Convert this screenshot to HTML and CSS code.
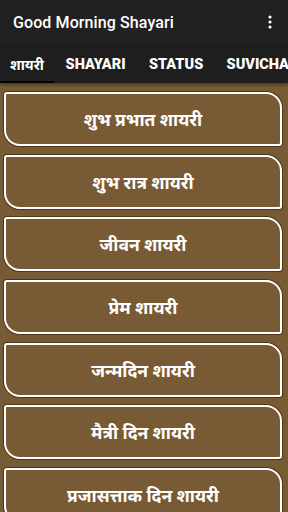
FILE: index.html
```html
<!DOCTYPE html>
<html lang="hi">

<head>
    <meta charset="UTF-8" />
    <meta name="viewport" content="width=device-width, initial-scale=1.0" />
    <title>Good Morning Shayari</title>
    <link rel="stylesheet" href="styles.css">
</head>

<body>

    <header class="appbar">
        <h1>Good Morning Shayari</h1>
        <span class="menu">
            <svg width="4" height="14" viewBox="0 0 4 14">
                <circle cx="2" cy="2" r="1.6" fill="#fff" />
                <circle cx="2" cy="7" r="1.6" fill="#fff" />
                <circle cx="2" cy="12" r="1.6" fill="#fff" />
            </svg>
        </span>
    </header>

    <nav class="tabs">
        <span class="tab active">शायरी</span>
        <span class="tab">SHAYARI</span>
        <span class="tab">STATUS</span>
        <span class="tab">SUVICHAR</span>
    </nav>

    <main class="list">
        <div class="card">शुभ प्रभात शायरी</div>
        <div class="card">शुभ रात्र शायरी</div>
        <div class="card">जीवन शायरी</div>
        <div class="card">प्रेम शायरी</div>
        <div class="card">जन्मदिन शायरी</div>
        <div class="card">मैत्री दिन शायरी</div>
        <div class="card">प्रजासत्ताक दिन शायरी</div>
    </main>

</body>

</html>
```

FILE: styles.css
```css
* {
    box-sizing: border-box;
    margin: 0;
    padding: 0;
}

body {
    width: 288px;
    height: 512px;
    overflow: hidden;
    background: #785a34;
    font-family: Roboto, "Noto Sans", sans-serif;
    color: #fff;
}

.appbar {
    height: 45px;
    background: #212121;
    display: flex;
    align-items: center;
    justify-content: space-between;
    padding: 0 16px 0 13px;
}

.appbar h1 {
    font-size: 16px;
    font-weight: 500;
    letter-spacing: 0.1px;
}

.menu {
    display: flex;
    margin-top: -2px;
}

.tabs {
    height: 38px;
    background: #1e1e1e;
    display: flex;
    white-space: nowrap;
    overflow: hidden;
    padding-top: 3px;
    box-shadow: 0 2px 3px rgba(0, 0, 0, 0.35);
}

.tab {
    display: flex;
    align-items: center;
    padding: 0 11.7px;
    font-size: 14.5px;
    font-weight: 900;
    border-bottom: 2px solid transparent;
    flex-shrink: 0;
}

.tab.active {
    padding: 0 10px;
    font-size: 14px;
    font-weight: 700;
    border-bottom-color: #000;
}

.list {
    padding: 9px 6px 0 4px;
    display: flex;
    flex-direction: column;
    gap: 8.7px;
}

.card {
    height: 54px;
    border: 2px solid #fff;
    border-radius: 3px 16px 3px 16px;
    box-shadow: 0 0 0 1px #4f3412;
    display: flex;
    align-items: center;
    justify-content: center;
    font-size: 17.5px;
    font-weight: 700;
    flex-shrink: 0;
}
```
